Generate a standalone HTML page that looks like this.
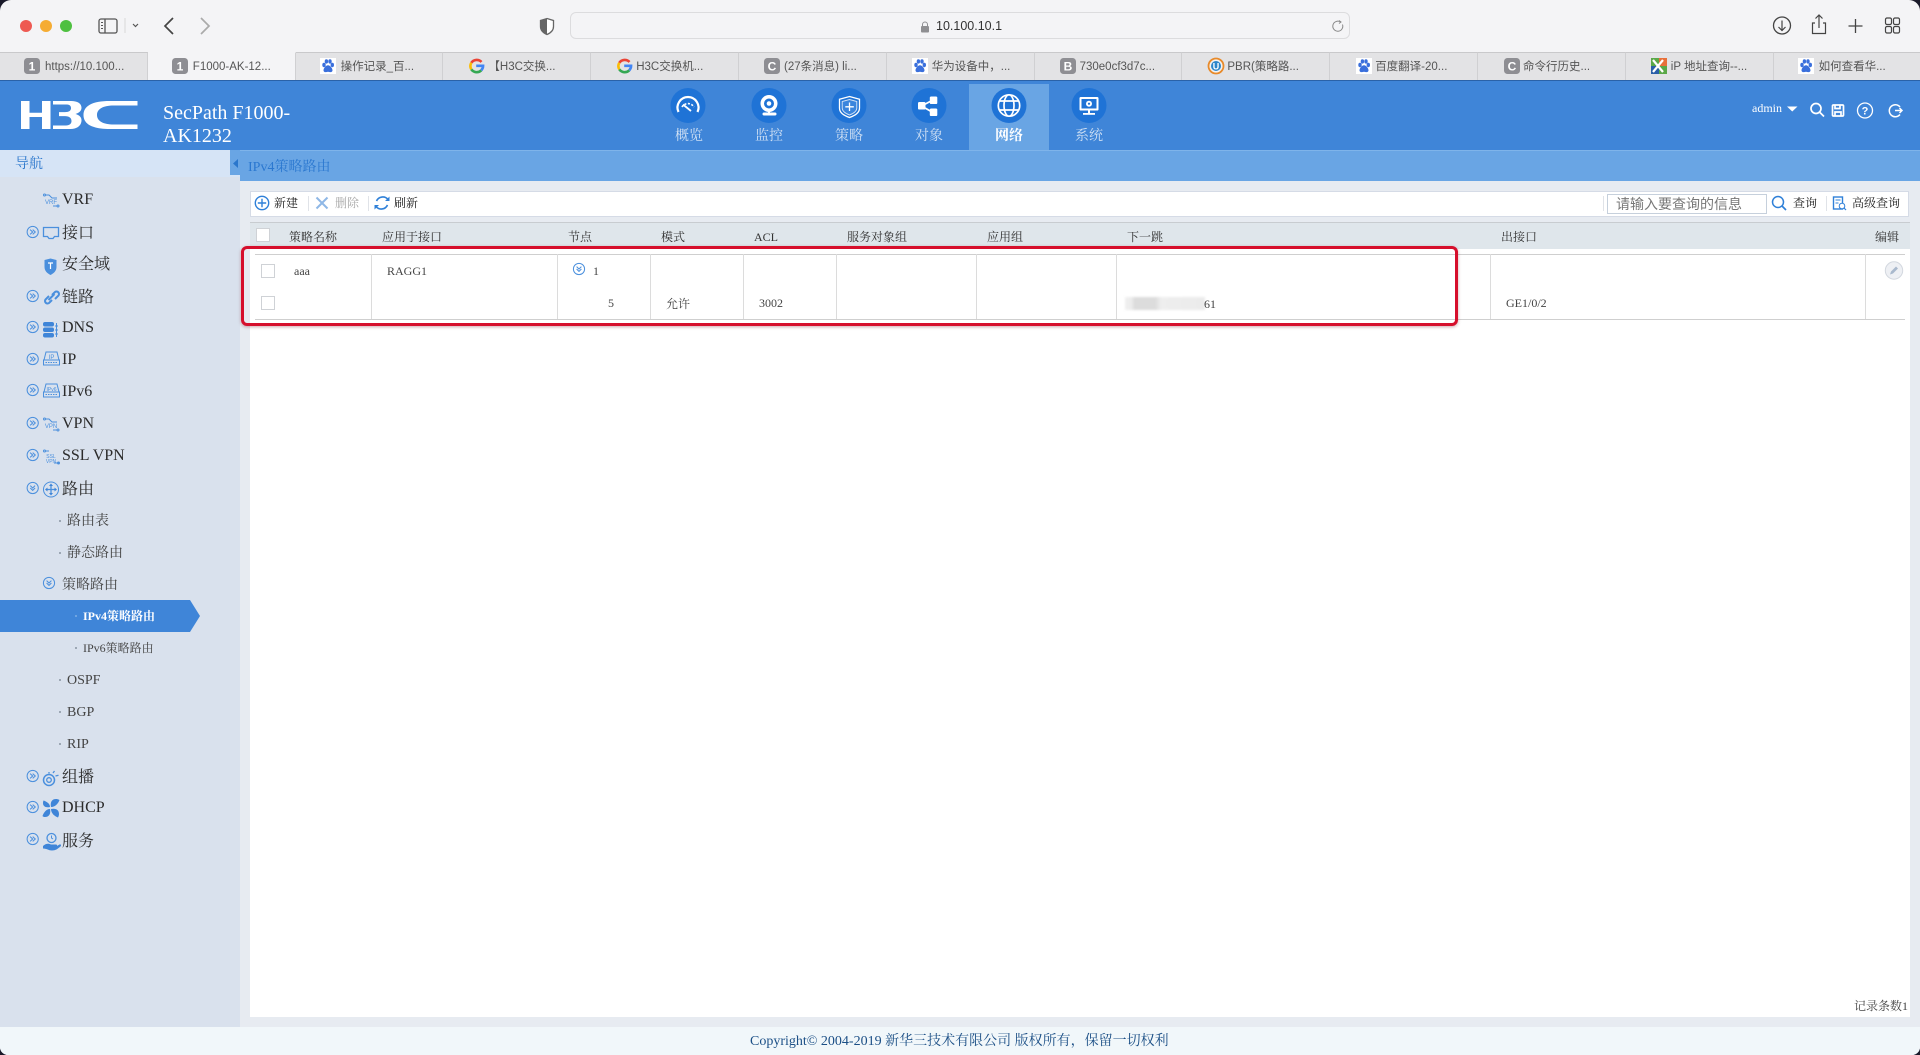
<!DOCTYPE html>
<html lang="zh-CN">
<head>
<meta charset="utf-8">
<title>F1000-AK1232</title>
<style>
html,body{margin:0;padding:0;width:1920px;height:1055px;overflow:hidden;background:#1a1a2a}
#w{position:absolute;left:0;top:0;width:1920px;height:1055px;overflow:hidden;border-radius:11px 11px 8px 8px;background:#f4f4f6;font-family:"Liberation Serif","Noto Serif CJK SC",serif;color:#333}
.a{position:absolute}
.t{position:absolute;height:20px;line-height:20px;white-space:nowrap}
.tab{position:absolute;top:52px;height:28px;width:147.8px;background:#e3e3e5;border-top:1px solid #c9c9cb;border-right:1px solid #d0d0d2;box-sizing:border-box;font:11.5px/28px "Liberation Sans","Noto Sans CJK SC",sans-serif;color:#555;padding-left:45px;white-space:nowrap;overflow:hidden}
.tab.on{background:#f4f4f6;border-top-color:#f4f4f6}
.nav{font-size:14px;color:#cfe0f4;width:60px;text-align:center}
.m{font-size:16px;color:#2b2b2b;left:62px}
.s{font-size:14px;color:#444;left:67px}
.dot{position:absolute;width:2px;height:2px;background:#8a94a2;border-radius:50%}
.h{font-size:12px;color:#333;top:226.5px}
.c{font-size:12px;color:#444}
.tb{font-size:12px;color:#222;top:193px}
.v{position:absolute;top:254px;height:65px;width:1px;background:#dcdcdc}
.cb{position:absolute;width:12px;height:12px;background:#fff;border:1px solid #cfd2d6}
.sep{position:absolute;top:196px;width:1px;height:15px;background:#e0e3e8}
</style>
</head>
<body>
<div id="w">

<!-- browser tabs -->
<div class="tab" style="left:0">https://10.100...</div>
<div class="tab on" style="left:147.8px">F1000-AK-12...</div>
<div class="tab" style="left:295.6px">操作记录_百...</div>
<div class="tab" style="left:443.4px">【H3C交换...</div>
<div class="tab" style="left:591.2px">H3C交换机...</div>
<div class="tab" style="left:739px">(27条消息) li...</div>
<div class="tab" style="left:886.8px">华为设备中，...</div>
<div class="tab" style="left:1034.6px">730e0cf3d7c...</div>
<div class="tab" style="left:1182.4px">PBR(策略路...</div>
<div class="tab" style="left:1330.2px">百度翻译-20...</div>
<div class="tab" style="left:1478px">命令行历史...</div>
<div class="tab" style="left:1625.8px">iP 地址查询--...</div>
<div class="tab" style="left:1773.6px;width:147px">如何查看华...</div>

<!-- address bar -->
<div class="a" style="left:570px;top:12px;width:778px;height:25px;border:1px solid #dcdcde;border-radius:6px;background:#f4f4f6"></div>
<div class="t" style="left:936px;top:16px;font:12.5px/20px 'Liberation Sans',sans-serif;color:#333">10.100.10.1</div>

<!-- header -->
<div class="a" style="left:0;top:80px;width:1920px;height:70px;background:#3f85d8;border-top:1px solid #2a62a8;box-sizing:border-box"></div>
<div class="a" style="left:969px;top:84px;width:80px;height:66px;background:#69a5e4"></div>
<div class="a" style="left:163px;top:102px;width:140px;font-size:20px;line-height:23px;color:#fff">SecPath F1000-<br>AK1232</div>
<div class="t nav" style="left:659px;top:127px">概览</div>
<div class="t nav" style="left:739px;top:127px">监控</div>
<div class="t nav" style="left:819px;top:127px">策略</div>
<div class="t nav" style="left:899px;top:127px">对象</div>
<div class="t nav" style="left:979px;top:127px;color:#fff;font-weight:bold">网络</div>
<div class="t nav" style="left:1059px;top:127px">系统</div>
<div class="t" style="left:1752px;top:98px;font-size:12px;color:#fff">admin</div>

<!-- sidebar -->
<div class="a" style="left:0;top:150px;width:240px;height:877px;background:#d9e1ed"></div>
<div class="a" style="left:0;top:150px;width:240px;height:27px;background:#d6e4f6"></div>
<div class="t" style="left:15px;top:155px;font-size:14px;color:#2a76cc">导航</div>
<div class="a" style="left:230px;top:150px;width:10px;height:25px;background:#69a5e4"></div>
<div class="t m" style="top:190px">VRF</div>
<div class="t m" style="top:224px">接口</div>
<div class="t m" style="top:255px">安全域</div>
<div class="t m" style="top:288px">链路</div>
<div class="t m" style="top:318px">DNS</div>
<div class="t m" style="top:350px">IP</div>
<div class="t m" style="top:382px">IPv6</div>
<div class="t m" style="top:414px">VPN</div>
<div class="t m" style="top:446px">SSL VPN</div>
<div class="t m" style="top:480px">路由</div>
<div class="dot" style="left:59px;top:520px"></div><div class="t s" style="top:512px">路由表</div>
<div class="dot" style="left:59px;top:552px"></div><div class="t s" style="top:544px">静态路由</div>
<div class="t s" style="left:62px;top:576px">策略路由</div>
<div class="a" style="left:0;top:600px;width:200px;height:32px;background:#3f85d8;clip-path:polygon(0 0,190px 0,200px 16px,190px 32px,0 32px)"></div>
<div class="dot" style="left:75px;top:615px;background:#7fb0e6"></div>
<div class="t" style="left:83px;top:606px;font-size:12px;font-weight:bold;color:#fff">IPv4策略路由</div>
<div class="dot" style="left:75px;top:647px"></div>
<div class="t" style="left:83px;top:638px;font-size:12px;color:#444">IPv6策略路由</div>
<div class="dot" style="left:59px;top:679px"></div><div class="t s" style="top:671px">OSPF</div>
<div class="dot" style="left:59px;top:711px"></div><div class="t s" style="top:703px">BGP</div>
<div class="dot" style="left:59px;top:743px"></div><div class="t s" style="top:735px">RIP</div>
<div class="t m" style="top:768px">组播</div>
<div class="t m" style="top:798px">DHCP</div>
<div class="t m" style="top:832px">服务</div>

<!-- content -->
<div class="a" style="left:240px;top:150px;width:1680px;height:877px;background:#e7ebf1"></div>
<div class="a" style="left:240px;top:150px;width:1680px;height:31px;background:#69a5e4;border-top:1px solid #7fb4ea;box-sizing:border-box"></div>
<div class="t" style="left:248px;top:158px;font-size:14px;color:#2b78d0">IPv4策略路由</div>

<div class="a" style="left:250px;top:191px;width:1659px;height:26px;background:#fff;border:1px solid #d5dbe6;box-sizing:border-box"></div>
<div class="a" style="left:250px;top:222px;width:1660px;height:795px;background:#fff"></div>
<div class="a" style="left:250px;top:222px;width:1660px;height:27px;background:#dfe6eb;border-top:1px solid #c8ccd0;box-sizing:border-box"></div>

<div class="t tb" style="left:274px">新建</div>
<div class="sep" style="left:308px"></div>
<div class="t tb" style="left:335px;color:#a8a8a8">删除</div>
<div class="sep" style="left:368px"></div>
<div class="t tb" style="left:394px">刷新</div>
<div class="sep" style="left:1603px"></div>
<div class="a" style="left:1607px;top:194px;width:158px;height:18px;border:1px solid #c6d0dc;background:#fff"></div>
<div class="t" style="left:1616px;top:195px;font:14px/19px 'Liberation Sans','Noto Sans CJK SC',sans-serif;color:#777">请输入要查询的信息</div>
<div class="t tb" style="left:1793px">查询</div>
<div class="sep" style="left:1826px"></div>
<div class="t tb" style="left:1852px">高级查询</div>

<div class="cb" style="left:256px;top:228px"></div>
<div class="t h" style="left:289px">策略名称</div>
<div class="t h" style="left:382px">应用于接口</div>
<div class="t h" style="left:568px">节点</div>
<div class="t h" style="left:661px">模式</div>
<div class="t h" style="left:754px">ACL</div>
<div class="t h" style="left:847px">服务对象组</div>
<div class="t h" style="left:987px">应用组</div>
<div class="t h" style="left:1127px">下一跳</div>
<div class="t h" style="left:1501px">出接口</div>
<div class="t h" style="left:1875px">编辑</div>

<div class="a" style="left:255px;top:254px;width:1650px;height:1px;background:#cfcfcf"></div>
<div class="a" style="left:255px;top:319px;width:1650px;height:1px;background:#cfcfcf"></div>
<div class="v" style="left:371px"></div>
<div class="v" style="left:557px"></div>
<div class="v" style="left:650px"></div>
<div class="v" style="left:743px"></div>
<div class="v" style="left:836px"></div>
<div class="v" style="left:976px"></div>
<div class="v" style="left:1116px"></div>
<div class="v" style="left:1490px"></div>
<div class="v" style="left:1865px"></div>

<div class="cb" style="left:261px;top:264px"></div>
<div class="cb" style="left:261px;top:296px"></div>
<div class="t c" style="left:294px;top:261px">aaa</div>
<div class="t c" style="left:387px;top:261px">RAGG1</div>
<div class="t c" style="left:593px;top:261px">1</div>
<div class="t c" style="left:608px;top:293px">5</div>
<div class="t c" style="left:666px;top:294px">允许</div>
<div class="t c" style="left:759px;top:293px">3002</div>
<div class="a" style="left:1125px;top:297px;width:80px;height:13px;background:linear-gradient(90deg,#f0f0f0 0,#ececec 8%,#dcdcdc 12%,#dcdcdc 38%,#eeeeee 45%,#ebebeb 100%);filter:blur(1px)"></div>
<div class="t c" style="left:1204px;top:294px">61</div>
<div class="t c" style="left:1506px;top:293px">GE1/0/2</div>

<div class="t" style="left:1854px;top:996px;font-size:12px;color:#444">记录条数1</div>

<!-- footer -->
<div class="a" style="left:0;top:1027px;width:1920px;height:28px;background:#f1f7fa"></div>
<div class="t" style="left:750px;top:1032px;font-size:14px;color:#1b4f86">Copyright© 2004-2019 新华三技术有限公司 版权所有，保留一切权利</div>

<!-- red box -->
<div class="a" style="left:241px;top:246px;width:1217px;height:80px;box-sizing:border-box;border:3px solid #d60f2c;border-radius:6px;box-shadow:0 1px 3px rgba(120,0,20,.35)"></div>

<!-- icons overlay -->
<svg class="a" style="left:0;top:0;pointer-events:none" width="1920" height="1055" viewBox="0 0 1920 1055" xmlns="http://www.w3.org/2000/svg" font-family="'Liberation Sans',sans-serif">
<defs>
<g id="fav1"><rect x="0" y="0" width="16" height="16" rx="3.5" fill="#8e8e93"/></g>
<g id="paw"><rect width="16" height="16" fill="#fff"/><ellipse cx="4" cy="7" rx="1.7" ry="2.2" fill="#3a6fdc"/><ellipse cx="6.4" cy="3.4" rx="1.7" ry="2.2" fill="#3a6fdc"/><ellipse cx="10" cy="3.4" rx="1.7" ry="2.2" fill="#3a6fdc"/><ellipse cx="12.3" cy="7" rx="1.7" ry="2.2" fill="#3a6fdc"/><path d="M8 7.2c-2 0-4.5 3-4.5 5 0 2.2 2.5 2.3 4.5 1.6 2 .7 4.5.6 4.5-1.6 0-2-2.5-5-4.5-5z" fill="#3a6fdc"/></g>
<g id="goog" fill="none" stroke-width="2.6"><path d="M13.5 4a6.6 6.6 0 0 0-10.2 .8" stroke="#ea4335"/><path d="M3.3 4.8a6.6 6.6 0 0 0 0 6.6" stroke="#fbbc05"/><path d="M3.3 11.4a6.6 6.6 0 0 0 10 .9" stroke="#34a853"/><path d="M13.3 12.3a6.6 6.6 0 0 0 1.8-4.5H8.2" stroke="#4285f4"/></g>
<g id="ex"><circle r="5.6" fill="none" stroke="#4a8fdd" stroke-width="1"/><path d="M-2.6-2.4L0 0l-2.6 2.4M0-2.4L2.6 0 0 2.4" fill="none" stroke="#4a8fdd" stroke-width="1"/></g>
<g id="dn"><circle r="5.6" fill="none" stroke="#4a8fdd" stroke-width="1"/><path d="M-2.4-2.4L0 0l2.4-2.4M-2.4 0L0 2.4 2.4 0" fill="none" stroke="#4a8fdd" stroke-width="1"/></g>
</defs>

<!-- traffic lights -->
<circle cx="26" cy="26" r="6" fill="#ee5a52"/><circle cx="46" cy="26" r="6" fill="#f5ac33"/><circle cx="66" cy="26" r="6" fill="#4ec040"/>
<!-- left toolbar -->
<rect x="99" y="19" width="18" height="14" rx="2" fill="none" stroke="#555" stroke-width="1.3"/><path d="M105 19v14" stroke="#555" stroke-width="1.3"/><path d="M101 22.5h2M101 25.5h2M101 28.5h2" stroke="#555"/>
<path d="M125 18v15" stroke="#d8d8d8"/>
<path d="M133 24l2.5 2.5L138 24" fill="none" stroke="#555" stroke-width="1.2"/>
<path d="M173 18l-8 8 8 8" fill="none" stroke="#444" stroke-width="1.7"/>
<path d="M201 18l8 8-8 8" fill="none" stroke="#aaa" stroke-width="1.7"/>
<path d="M547 18.5l6.5 2v6c0 4-3 6.500-6.500 8-3.500-1.500-6.500-4-6.500-8v-6z" fill="#fff" stroke="#666" stroke-width="1.3"/><path d="M547 18.500v16c-3.500-1.500-6.500-4-6.500-8v-6z" fill="#666"/>
<!-- lock -->
<rect x="921" y="26" width="8" height="6.500" rx="1" fill="#8f8f92"/><path d="M922.500 26v-1.500a2.500 2.500 0 0 1 5 0V26" fill="none" stroke="#8f8f92" stroke-width="1"/>
<!-- reload -->
<path d="M1342.500 24.500a5 5 0 1 1-2-2.500" fill="none" stroke="#888" stroke-width="1"/><path d="M1339 20.500l2 1.500-2 1.500" fill="none" stroke="#888" stroke-width="1"/>
<!-- right toolbar -->
<circle cx="1782" cy="25.500" r="8.500" fill="none" stroke="#444" stroke-width="1.300"/><path d="M1782 20.500v9.500M1778.500 27l3.500 3.500 3.500-3.500" fill="none" stroke="#444" stroke-width="1.200"/>
<path d="M1815 23h-2.500v10.500h13V23H1823M1819 28V15.500M1815.500 18.500l3.500-3.500 3.500 3.500" fill="none" stroke="#444" stroke-width="1.200"/>
<path d="M1855.500 19v14M1848.500 26h14" stroke="#444" stroke-width="1.300"/>
<g fill="none" stroke="#444" stroke-width="1.200"><rect x="1885.500" y="18" width="6" height="6.500" rx="1.500"/><rect x="1893.500" y="18" width="6" height="6.500" rx="1.500"/><rect x="1885.500" y="26.500" width="6" height="6.500" rx="1.500"/><rect x="1893.500" y="26.500" width="6" height="6.500" rx="1.500"/></g>

<!-- tab favicons -->
<use href="#fav1" x="24" y="58"/><text x="32" y="70.500" font-size="12" font-weight="bold" fill="#fff" text-anchor="middle">1</text>
<use href="#fav1" x="172" y="58"/><text x="180" y="70.500" font-size="12" font-weight="bold" fill="#fff" text-anchor="middle">1</text>
<use href="#paw" x="320" y="58"/>
<use href="#goog" x="468" y="58"/>
<use href="#goog" x="616" y="58"/>
<use href="#fav1" x="764" y="58"/><text x="772" y="70.500" font-size="12" font-weight="bold" fill="#fff" text-anchor="middle">C</text>
<use href="#paw" x="912" y="58"/>
<use href="#fav1" x="1060" y="58"/><text x="1068" y="70.500" font-size="12" font-weight="bold" fill="#fff" text-anchor="middle">B</text>
<circle cx="1216" cy="66" r="7.500" fill="#f2f2f2" stroke="#e88a2a" stroke-width="1.800"/><circle cx="1216" cy="66" r="5" fill="#2e86c9"/><text x="1216" y="69.500" font-size="9" font-weight="bold" fill="#fff" text-anchor="middle">U</text>
<use href="#paw" x="1356" y="58"/>
<use href="#fav1" x="1504" y="58"/><text x="1512" y="70.500" font-size="12" font-weight="bold" fill="#fff" text-anchor="middle">C</text>
<rect x="1651" y="58" width="16" height="16" fill="#5aa848"/><rect x="1651" y="66" width="8" height="8" fill="#2a5fa8"/><rect x="1659" y="58" width="8" height="8" fill="#e8703a"/><path d="M1653 60l10 12M1663 60l-10 12" stroke="#fff" stroke-width="2.200"/>
<use href="#paw" x="1798" y="58"/>

<!-- H3C logo -->
<g fill="#fff">
<path d="M21 101h8.500v11.700H42V101h8.500v28H42v-12H29.500v12H21z"/>
<path d="M53 101h18c6.500 0 10.500 2.500 10.500 6.800 0 3.200-2.500 5.200-6 6.200 3.500 1 6 3 6 6.200 0 5.300-4.500 8.800-11 8.800H53v-3.500h13c3.500 0 5.500-1.800 5.500-4.500 0-3-2.200-4.900-6.500-4.900h-6v-4h6c4 0 6-1.500 6-4 0-2.700-2-3.600-5-3.600H53z"/>
<path d="M137.500 101H110C92 101 83.500 106 83.500 115S92 129 110 129h27.500v-4.500H114c-11 0-17-3.500-17-9.500s6-9.500 17-9.500h23.500z"/>
</g>

<!-- nav circles -->
<g fill="#1f73d6"><circle cx="688" cy="105.500" r="17.500"/><circle cx="769" cy="105.500" r="17.500"/><circle cx="849" cy="105.500" r="17.500"/><circle cx="929" cy="105.500" r="17.500"/><circle cx="1009" cy="105.500" r="17.500"/><circle cx="1089" cy="105.500" r="17.500"/></g>
<!-- gauge -->
<g fill="none" stroke="#fff">
<path d="M678.500 112a10.500 10.500 0 1 1 19 0" stroke-width="2.200"/><path d="M682 107a7 7 0 0 1 12 0" stroke-width="1.600" stroke-dasharray="2 1.500"/><path d="M683 104.500l8 6.500" stroke-width="1.800"/>
</g>
<!-- webcam -->
<circle cx="769" cy="103.500" r="8.500" fill="#fff"/><circle cx="769" cy="103.500" r="5" fill="#1f73d6"/><circle cx="769" cy="103.500" r="2.300" fill="#fff"/><path d="M769 111v2" stroke="#fff" stroke-width="2"/><rect x="762.500" y="112.500" width="14" height="3" rx="1.500" fill="#fff"/>
<!-- shield -->
<path d="M849.500 96.500l10 2.800v8.700c0 5-4.500 7.500-10 9.500-5.500-2-10-4.500-10-9.500v-8.700z" fill="none" stroke="#fff" stroke-width="1.300"/><path d="M849.500 99.500l7.300 2v6.500c0 3.500-3.300 5.500-7.300 7-4-1.500-7.300-3.500-7.300-7v-6.500z" fill="#3a85dd" stroke="#cfe0f5"/><path d="M849.500 102.500v8.500M845.300 106.800h8.500" stroke="#fff" stroke-width="1.300"/>
<!-- share -->
<g fill="#fff"><rect x="929.800" y="96.500" width="7.500" height="7.500" rx="1.300"/><rect x="918" y="102" width="7.500" height="7.500" rx="1.300"/><rect x="929.800" y="108.500" width="7.500" height="7.500" rx="1.300"/></g><path d="M933 100l-11.500 6 11.500 6.500" fill="none" stroke="#fff" stroke-width="1.800"/>
<!-- globe -->
<g fill="none" stroke="#fff" stroke-width="1.700"><circle cx="1009" cy="105.500" r="10.700"/><ellipse cx="1009" cy="105.500" rx="5" ry="10.700"/><path d="M999 101h20M999 110h20"/></g>
<!-- monitor -->
<rect x="1079.500" y="97" width="19" height="13.500" rx="1.300" fill="#fff"/><rect x="1081.500" y="99" width="15" height="9.500" fill="#1f73d6"/><circle cx="1089" cy="103.700" r="3" fill="#fff"/><circle cx="1089" cy="103.700" r="1.100" fill="#1f73d6"/><path d="M1089 110.500v3" stroke="#fff" stroke-width="2"/><rect x="1083" y="113" width="12" height="1.800" fill="#fff"/>

<!-- header right -->
<path d="M1787 106.500h10.500l-5.250 5z" fill="#fff"/>
<g fill="none" stroke="#fff" stroke-width="1.700"><circle cx="1816" cy="108.500" r="5"/><path d="M1820 112.500l4 4"/><rect x="1832.500" y="105" width="11" height="11" rx="1"/><path d="M1835 105v3.500h5V105M1835 116v-4h6v4"/><circle cx="1865" cy="110.500" r="7.500" stroke-width="1.300"/><path d="M1900 107a6 6 0 1 0 0 7.500M1895 110.500h6.500M1899.500 108l2.500 2.500-2.500 2.500" stroke-width="1.500"/></g>
<text x="1865" y="114.500" font-size="11" font-weight="bold" fill="#fff" text-anchor="middle">?</text>

<!-- collapse arrow -->
<path d="M238 159v9l-5-4.500z" fill="#2a76cc"/>

<!-- sidebar icons -->
<g transform="translate(0,1)">
<use href="#ex" x="32.700" y="231"/><use href="#ex" x="32.700" y="295"/><use href="#ex" x="32.700" y="326"/><use href="#ex" x="32.700" y="358"/><use href="#ex" x="32.700" y="389"/><use href="#ex" x="32.700" y="422"/><use href="#ex" x="32.700" y="454"/><use href="#dn" x="32.700" y="487"/><use href="#dn" x="49" y="582"/><use href="#ex" x="32.700" y="775"/><use href="#ex" x="32.700" y="806"/><use href="#ex" x="32.700" y="838"/>

<g fill="none" stroke="#4a8fdd" stroke-width="1">
<!-- VRF -->
<path d="M45 194h4l3 3h5M53 205h4"/><circle cx="44.500" cy="194" r="1"/><circle cx="58" cy="205" r="1"/>
<!-- interface -->
<path d="M43.500 226.500h15v9h-4l-1.500 2h-4l-1.500-2h-4z" stroke-width="1.300"/>
<!-- link -->
<path d="M49 295l-3.500 3.500a2.500 2.500 0 0 0 3.500 3.500l3-3M52 294l3-3a2.500 2.500 0 0 1 3.500 3.500L55 298M48.500 299l6-6" stroke-width="2"/>
<!-- IP -->
<path d="M46 351h11l2 8H44zM43.500 359h16v5h-16z" stroke-width="1"/><path d="M45.500 361.500h12" stroke-dasharray="1.500 1"/>
<path d="M46 383h11l2 8H44zM43.500 391h16v5h-16z" stroke-width="1"/><path d="M45.500 393.500h12" stroke-dasharray="1.500 1"/>
<!-- VPN -->
<path d="M45 418h4l3 3h5M53 429h4"/><circle cx="44.500" cy="418" r="1"/><circle cx="58" cy="429" r="1"/>
<!-- SSL -->
<path d="M45 450h4M54 462h5"/><circle cx="44.500" cy="450" r="1"/><circle cx="58.500" cy="462" r="1"/>
<!-- route -->
<circle cx="51" cy="488.500" r="7.500"/><path d="M51 484v9M46.500 488.500h9" stroke-width="1.300"/>
<!-- multicast -->
<circle cx="49" cy="779" r="5.500" stroke-width="1.500"/><circle cx="49" cy="779" r="2.300" stroke-width="1.300"/><path d="M53 772l1.500-2M55.500 775l3-.8M49 772.500v-1.500" stroke-width="1.300"/>
<!-- service -->
<circle cx="51.500" cy="837" r="4.500" stroke-width="1.300"/><path d="M51.500 834.500v2.500l1.500 1"/>
</g>
<text x="51" y="203" font-size="6" fill="#4a8fdd" text-anchor="middle">VRF</text>
<text x="51" y="427" font-size="6" fill="#4a8fdd" text-anchor="middle">VPN</text>
<text x="51" y="457" font-size="5" fill="#4a8fdd" text-anchor="middle">SSL</text>
<text x="51" y="462" font-size="5" fill="#4a8fdd" text-anchor="middle">VPN</text>
<text x="51.500" y="358" font-size="6" fill="#4a8fdd" text-anchor="middle">IP</text>
<text x="51.500" y="390" font-size="5" fill="#4a8fdd" text-anchor="middle">IPv6</text>
<!-- safe zone shield -->
<path d="M50.500 257.500l6 1.500v7c0 4-3 6.500-6 8-3-1.500-6-4-6-8v-7z" fill="#4a8fdd"/><path d="M48 262h5M50.500 262v6" stroke="#fff" stroke-width="1.200"/>
<!-- dns -->
<g fill="#3f85d8"><rect x="43" y="321" width="11" height="4.500" rx="2"/><rect x="43" y="326.500" width="11" height="4.500" rx="2"/><rect x="43" y="332" width="11" height="4.500" rx="2"/></g>
<path d="M56.500 322v14M55 325h3M55 329h3M55 333h3" stroke="#4a8fdd" fill="none"/>
<!-- route arrows -->
<path d="M51 482.500l2 2.500h-4zM51 494.500l2-2.500h-4zM45 488.500l2.500-2v4zM57 488.500l-2.500-2v4z" fill="#3f85d8"/>
<!-- dhcp pinwheel -->
<path d="M51 806c-1-5 1-8 5-8 2 0 3.500 1 3.500 1-1 3-4 7-8.500 7zM51 808c5-1 8 1 8 5 0 2-1 3.500-1 3.500-3-1-7-4-7-8.500zM50 808c1 5-1 8-5 8-2 0-2.500-1-2.500-1 1-3 3.500-7 7.500-7zM50 806c-5 1-7-1-7-4 0-1 .5-2.500.5-2.500 3 1 6.500 3 6.500 6.500z" fill="#3f85d8"/>
<!-- hand -->
<path d="M43 845c3-3 6-2.500 8-1.500h5c1.500 0 1.500 2 0 2h-4l4.500-.2 3-1.800c1.500-.5 2 1 1 2-3 2.500-5 4-8.500 4-3.500 0-5-2-9-2z" fill="#3f85d8"/>
</g>

<!-- toolbar icons -->
<circle cx="262" cy="203" r="6.700" fill="none" stroke="#2f80d8" stroke-width="1.400"/><path d="M262 198.800v8.400M257.800 203h8.400" stroke="#2f80d8" stroke-width="1.400"/>
<path d="M316.500 197.500l11 11M327.500 197.500l-11 11" stroke="#8fb8e6" stroke-width="2"/>
<path d="M388 199.500a6.800 6.800 0 0 0-11.500 1.500M376 206.500a6.800 6.800 0 0 0 11.500-1.500" fill="none" stroke="#2f80d8" stroke-width="1.600"/><path d="M389.500 196.500v4.500H385zM374.500 209.500V205h4.500z" fill="#2f80d8"/>
<circle cx="1778" cy="202" r="5.500" fill="none" stroke="#2f80d8" stroke-width="1.500"/><path d="M1782 206l4 4" stroke="#2f80d8" stroke-width="1.700"/>
<rect x="1833.500" y="197" width="9" height="12" fill="none" stroke="#2f80d8" stroke-width="1.400"/><path d="M1835.500 200h5M1835.500 203h3" stroke="#2f80d8"/><circle cx="1842" cy="206" r="2.800" fill="#fff" stroke="#2f80d8"/><path d="M1844 208l2 2" stroke="#2f80d8" stroke-width="1.200"/>

<!-- row icons -->
<use href="#dn" x="579" y="269"/>
<circle cx="1894" cy="270.500" r="8.700" fill="#eef0f4" stroke="#d3d8df"/><path d="M1890 274.500l1-3 5-5 2 2-5 5z" fill="#a9b9cd"/>
</svg>
</div>
</body>
</html>
